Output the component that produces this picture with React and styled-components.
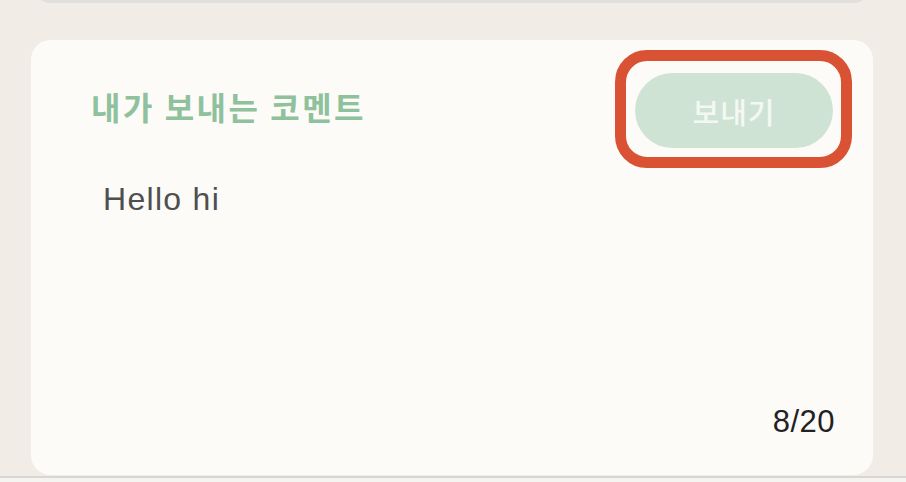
import React, { useState } from "react";
import styled, { createGlobalStyle } from "styled-components";

const GlobalStyle = createGlobalStyle`
  body {
    margin: 0;
    background-color: #f1ede6;
    font-family: "Liberation Sans", "Noto Sans CJK KR", sans-serif;
  }
`;

const Page = styled.div`
  display: flex;
  flex-direction: column;
  height: 482px;
  padding: 0 33px 0 31px;
  overflow: hidden;
`;

const PrevCard = styled.div`
  flex-shrink: 0;
  height: 60px;
  margin-top: -57px;
  border-radius: 20px;
  background-color: #e2e0dc;
`;

const Card = styled.section`
  flex-shrink: 0;
  display: flex;
  flex-direction: column;
  box-sizing: border-box;
  height: 435px;
  margin-top: 37px;
  padding: 33px 40px 38px 60px;
  border-radius: 20px;
  background-color: #fcfbf8;
`;

const Header = styled.div`
  display: flex;
  justify-content: space-between;
  align-items: center;
`;

const Title = styled.h2`
  margin: 0 0 10px;
  font-family: "Noto Sans CJK KR", sans-serif;
  font-size: 32px;
  font-weight: 700;
  letter-spacing: 2.5px;
  color: #8fc19c;
`;

const Highlight = styled.div`
  position: relative;

  &::after {
    content: "";
    position: absolute;
    top: -23px;
    left: -20px;
    right: -19px;
    bottom: -20px;
    border: 11px solid #d95234;
    border-radius: 32px;
    pointer-events: none;
  }
`;

const SendButton = styled.button`
  width: 198px;
  height: 75px;
  border: none;
  border-radius: 38px;
  background-color: #cfe3d5;
  color: #f4f8f3;
  font-family: "Noto Sans CJK KR", sans-serif;
  font-size: 29px;
  font-weight: 500;
  letter-spacing: 1px;
  cursor: ${(p) => (p.disabled ? "default" : "pointer")};
`;

const Message = styled.textarea`
  flex: 1;
  margin: 32px 0 0 12px;
  padding: 0;
  border: none;
  outline: none;
  resize: none;
  background: transparent;
  font-family: "Liberation Sans", sans-serif;
  font-size: 32px;
  line-height: 1.2;
  letter-spacing: 1.3px;
  color: #4f4f4f;
`;

const Counter = styled.div`
  align-self: flex-end;
  margin-right: -2px;
  font-size: 31px;
  line-height: 1;
  letter-spacing: 0.5px;
  color: #222;
`;

const Footer = styled.div`
  flex-shrink: 0;
  height: 6px;
  margin: 1px -33px 0 -31px;
  border-top: 2px solid #d8d6d2;
  background-color: #f6f4f0;
`;

const MAX = 20;

export default function App() {
  const [text, setText] = useState("Hello hi");

  return (
    <>
      <GlobalStyle />
      <Page>
        <PrevCard />
        <Card>
          <Header>
            <Title>내가 보내는 코멘트</Title>
            <Highlight>
              <SendButton disabled>보내기</SendButton>
            </Highlight>
          </Header>
          <Message
            value={text}
            maxLength={MAX}
            onChange={(e) => setText(e.target.value)}
          />
          <Counter>
            {text.length}/{MAX}
          </Counter>
        </Card>
        <Footer />
      </Page>
    </>
  );
}
